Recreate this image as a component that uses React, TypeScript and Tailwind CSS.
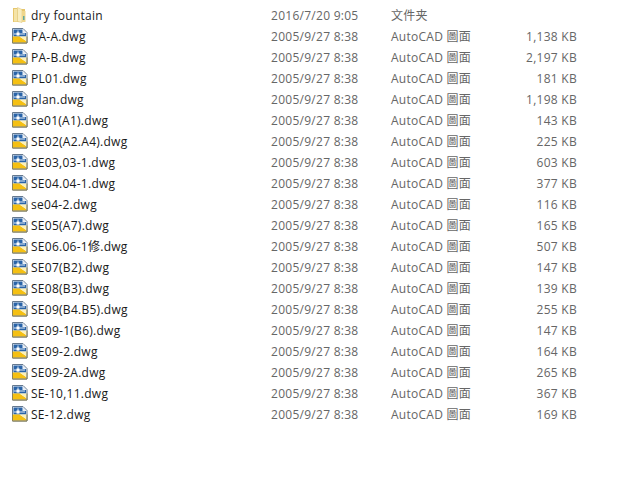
const files: [string, string][] = [
  ['PA-A.dwg', '1,138 KB'],
  ['PA-B.dwg', '2,197 KB'],
  ['PL01.dwg', '181 KB'],
  ['plan.dwg', '1,198 KB'],
  ['se01(A1).dwg', '143 KB'],
  ['SE02(A2.A4).dwg', '225 KB'],
  ['SE03,03-1.dwg', '603 KB'],
  ['SE04.04-1.dwg', '377 KB'],
  ['se04-2.dwg', '116 KB'],
  ['SE05(A7).dwg', '165 KB'],
  ['SE06.06-1修.dwg', '507 KB'],
  ['SE07(B2).dwg', '147 KB'],
  ['SE08(B3).dwg', '139 KB'],
  ['SE09(B4.B5).dwg', '255 KB'],
  ['SE09-1(B6).dwg', '147 KB'],
  ['SE09-2.dwg', '164 KB'],
  ['SE09-2A.dwg', '265 KB'],
  ['SE-10,11.dwg', '367 KB'],
  ['SE-12.dwg', '169 KB'],
]

function FolderIcon() {
  return (
    <svg width="16" height="16" viewBox="0 0 16 16" className="shrink-0 mb-px">
      <path d="M1 1h4l1 1h7v13H1z" fill="#e6c66c" />
      <path d="M2 2h3.500v12.500H2z" fill="#f5e4a8" />
      <path d="M5.500 0.500l4.500 2v13l-4.500-1z" fill="#f8edc0" stroke="#dcc070" strokeWidth="0.5" />
      <path d="M10 4h3.500v11H10z" fill="#efd68c" />
      <path d="M11 9h1.500v4H11z" fill="#5fa8a0" />
    </svg>
  )
}

function DwgIcon() {
  return (
    <svg width="16" height="16" viewBox="0 0 16 16" className="shrink-0 mb-px">
      <path d="M0.500 0.500h10.500l4 4v10.500h-14.500z" fill="#f4f7fb" stroke="#64788f" />
      <path d="M1.500 1.500h9v3.500h3.500v3.500h-12.500z" fill="#2a64a8" />
      <path d="M11 1.500l3 3h-3z" fill="#e3ebf4" />
      <path d="M2 6h11M6 2.500v5" stroke="#dfeaf6" strokeWidth="1" />
      <rect x="4.500" y="4.500" width="3" height="3" fill="#ffffff" />
      <path d="M1 8.500h6.500l6.500 4.500v1.500H1z" fill="#f5c012" />
      <path d="M7.500 8.500H14.500v4.500z" fill="#fdf1b8" />
      <path d="M0.500 8.500v6.500h14.500v-6.500" fill="none" stroke="#8f8450" />
    </svg>
  )
}

function Row({ icon, name, date, type, size }: { icon: React.ReactNode; name: string; date: string; type: string; size: string }) {
  return (
    <div className="flex items-center h-[21px]">
      <div className="w-[271px] pl-3 flex items-center gap-[3px] text-[#1a1a1a] whitespace-nowrap">
        {icon}
        <span>{name}</span>
      </div>
      <div className="w-[120px] whitespace-nowrap">{date}</div>
      <div className="w-[100px] whitespace-nowrap">{type}</div>
      <div className="w-[86px] text-right whitespace-nowrap">{size}</div>
    </div>
  )
}

export default function App() {
  return (
    <div className="w-[628px] h-[481px] bg-white overflow-hidden pt-[5px] text-[12px] leading-none tracking-[0.27px] text-[#666666] font-['Open_Sans','Noto_Sans_CJK_SC',sans-serif]">
      <Row icon={<FolderIcon />} name="dry fountain" date="2016/7/20 9:05" type="文件夹" size="" />
      {files.map(([name, size]) => (
        <Row key={name} icon={<DwgIcon />} name={name} date="2005/9/27 8:38" type="AutoCAD 圖面" size={size} />
      ))}
    </div>
  )
}
